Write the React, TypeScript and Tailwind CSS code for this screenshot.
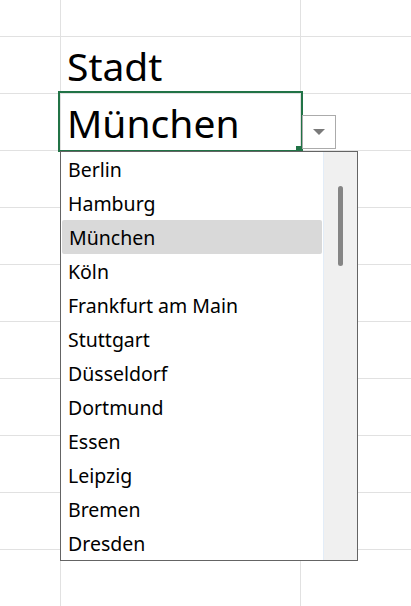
const cities = [
  "Berlin",
  "Hamburg",
  "München",
  "Köln",
  "Frankfurt am Main",
  "Stuttgart",
  "Düsseldorf",
  "Dortmund",
  "Essen",
  "Leipzig",
  "Bremen",
  "Dresden",
];

const font = { fontFamily: '"Noto Sans", "Open Sans", sans-serif' };

function Row({ first, children }: { first?: boolean; children?: React.ReactNode }) {
  return (
    <div className={`flex border-b border-[#e1e1e1] ${first ? "h-[37px]" : "h-[57px]"}`}>
      <div className="w-[61px] shrink-0 border-r border-[#e1e1e1]" />
      <div className="w-[240px] shrink-0 border-r border-[#e1e1e1] flex items-end">{children}</div>
      <div className="flex-1" />
    </div>
  );
}

export default function App() {
  return (
    <div className="relative w-[411px] h-[606px] overflow-hidden bg-white text-black" style={font}>
      {/* sheet grid */}
      <Row first />
      <Row>
        <span className="pl-[6px] pb-[1px] text-[39px] leading-[52px]">Stadt</span>
      </Row>
      <Row>
        <span className="pl-[6px] pb-[1px] text-[39px] leading-[52px]">München</span>
      </Row>
      {Array.from({ length: 9 }).map((_, i) => (
        <Row key={i} />
      ))}

      {/* active cell */}
      <div className="absolute left-[58px] top-[91px] w-[245px] h-[61px] border-2 border-[#217346]" />
      <div className="absolute left-[296px] top-[146px] w-[6px] h-[6px] bg-[#217346]" />

      {/* validation dropdown button */}
      <div className="absolute left-[302px] top-[115px] w-[34px] h-[34px] border border-[#ababab] bg-white flex items-center justify-center">
        <div className="w-0 h-0 border-l-[6px] border-r-[6px] border-t-[6px] border-l-transparent border-r-transparent border-t-[#7a7a7a]" />
      </div>

      {/* list */}
      <div className="absolute left-[60px] top-[151px] w-[298px] h-[410px] border border-[#646464] bg-white flex">
        <div className="flex-1 flex flex-col">
          {cities.map((c) => (
            <div
              key={c}
              className={`h-[34px] shrink-0 flex items-center pl-[7px] pt-[2px] text-[19.5px] ${
                c === "München" ? "bg-[#d9d9d9] rounded-[2px] mx-px" : ""
              }`}
            >
              {c}
            </div>
          ))}
        </div>
        <div className="w-[34px] shrink-0 bg-[#f0f0f0] border-l border-[#e3edf8] relative">
          <div className="absolute left-[14px] top-[34px] w-[5px] h-[80px] rounded-full bg-[#858585]" />
        </div>
      </div>
    </div>
  );
}
